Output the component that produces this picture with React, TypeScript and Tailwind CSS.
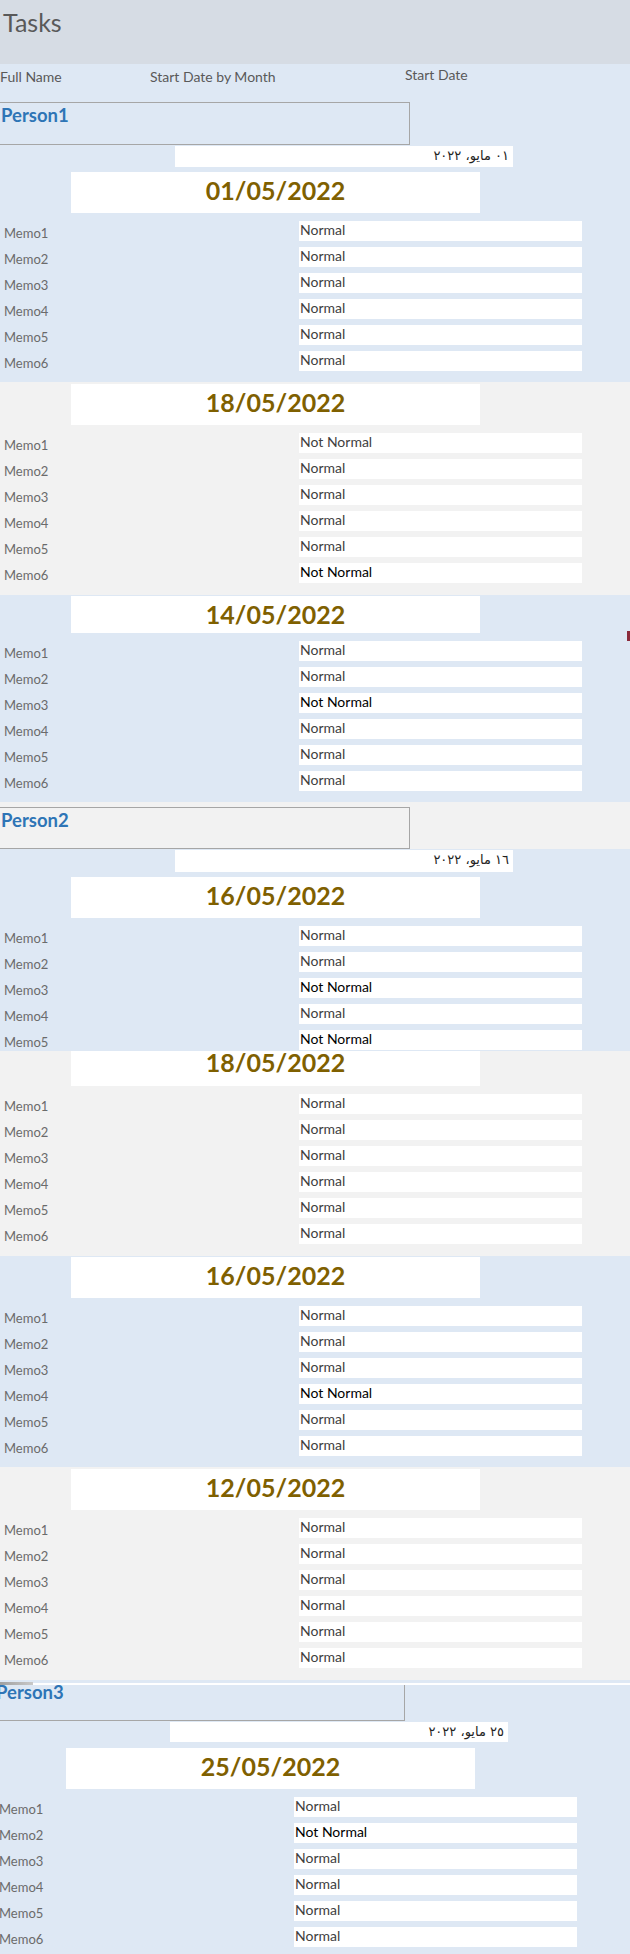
import clsx from "clsx";

type Memo = { label: string; value: string; dark?: boolean };

const makeMemos = (count: number, notNormal: number[], grayNot: number[] = []): Memo[] =>
	Array.from({ length: count }, (_, i) => {
		const n = i + 1;
		const isNot = notNormal.includes(n) || grayNot.includes(n);
		return {
			label: `Memo${n}`,
			value: isNot ? "Not Normal" : "Normal",
			dark: notNormal.includes(n),
		};
	});

const MemoRows = ({ rows }: { rows: Memo[] }) => (
	<div className="mt-[8px] flex flex-col gap-[6px]">
		{rows.map((r) => (
			<div key={r.label} className="flex h-[20px] items-start">
				<span className="w-[299px] pl-[4px] pt-[3px] text-[13px] leading-[18px] text-[#6b6b6b]">
					{r.label}
				</span>
				<span
					className={clsx(
						"h-[20px] w-[283px] bg-white pl-[1px] text-[14px] leading-[18px]",
						r.dark ? "text-black" : "text-[#404040]"
					)}
				>
					{r.value}
				</span>
			</div>
		))}
	</div>
);

const DateBox = ({ date, box }: { date: string; box: string }) => (
	<div
		className={clsx(
			"ml-[71px] w-[409px] bg-white text-center text-[25px] font-bold text-[#7f6000]",
			box
		)}
	>
		{date}
	</div>
);

const ArabicDate = ({ text, box }: { text: string; box: string }) => (
	<div
		dir="rtl"
		className={clsx(
			"ml-[175px] w-[338px] bg-white pr-[4px] font-['DejaVu_Sans',sans-serif] text-[13px] leading-[20px] text-[#222222]",
			box
		)}
	>
		{text}
	</div>
);

const PersonBox = ({ name, box }: { name: string; box: string }) => (
	<div
		className={clsx(
			"w-[410px] border-r border-b border-[#a6a6a6] pl-[1px] text-[18.5px] font-bold text-[#2e75b6]",
			box
		)}
	>
		{name}
	</div>
);

const App = () => {
	return (
		<div className="relative h-[1954px] w-[630px] overflow-hidden bg-[#dee8f4] font-[Lato,'Noto_Sans',sans-serif]">
			<header className="h-[64px] bg-[#d6dce4] pl-[3px] pt-[7px] text-[25px] leading-[30px] text-[#595959]">
				Tasks
			</header>

			{/* Person1 */}
			<section className="bg-[#dee8f4] pb-[11px]">
				<div className="flex h-[38px] text-[14px] leading-[18px] text-[#595959]">
					<span className="w-[150px] pt-[4px]">Full Name</span>
					<span className="w-[255px] pt-[4px]">Start Date by Month</span>
					<span className="pt-[2px]">Start Date</span>
				</div>
				<PersonBox name="Person1" box="h-[43px] border-t leading-[24px]" />
				<ArabicDate text="٠١ مايو، ٢٠٢٢" box="mt-[1px] h-[21px]" />
				<div className="mt-[5px]">
					<DateBox date="01/05/2022" box="h-[41px] leading-[37px]" />
				</div>
				<MemoRows rows={makeMemos(6, [])} />
			</section>

			<section className="bg-[#f2f2f2] pt-[2px] pb-[12px]">
				<DateBox date="18/05/2022" box="h-[41px] leading-[37px]" />
				<MemoRows rows={makeMemos(6, [6], [1])} />
			</section>

			<section className="bg-[#dee8f4] pt-[1px] pb-[11px]">
				<DateBox date="14/05/2022" box="h-[37px] leading-[37px]" />
				<MemoRows rows={makeMemos(6, [3])} />
			</section>

			{/* Person2 */}
			<section className="bg-[#f2f2f2] pt-[5px]">
				<PersonBox name="Person2" box="h-[42px] border-t leading-[24px]" />
			</section>

			<section className="bg-[#dee8f4] pt-[1px] pb-[1px]">
				<ArabicDate text="١٦ مايو، ٢٠٢٢" box="h-[22px]" />
				<div className="mt-[5px]">
					<DateBox date="16/05/2022" box="h-[41px] leading-[37px]" />
				</div>
				<MemoRows rows={makeMemos(5, [3, 5])} />
			</section>

			<section className="bg-[#f2f2f2] pb-[12px]">
				<DateBox date="18/05/2022" box="h-[35px] leading-[23px]" />
				<MemoRows rows={makeMemos(6, [])} />
			</section>

			<section className="bg-[#dee8f4] pt-[1px] pb-[11px]">
				<DateBox date="16/05/2022" box="h-[41px] leading-[37px]" />
				<MemoRows rows={makeMemos(6, [4])} />
			</section>

			<section className="bg-[#f2f2f2] pt-[2px] pb-[12px]">
				<DateBox date="12/05/2022" box="h-[41px] leading-[37px]" />
				<MemoRows rows={makeMemos(6, [])} />
			</section>

			<div className="flex h-[5px] items-end bg-[#dee8f4]">
				<div className="h-[3px] w-[33px] bg-gradient-to-r from-[#a0a0a0] to-[#c8c8c8]" />
				<div className="h-[2px] flex-1 bg-white" />
			</div>

			{/* Person3 */}
			<section className="bg-[#dee8f4] pb-[7px]">
				<div className="-ml-[5px]">
					<PersonBox name="Person3" box="h-[36px] leading-[14px]" />
					<ArabicDate text="٢٥ مايو، ٢٠٢٢" box="mt-[1px] h-[20px]" />
					<div className="mt-[6px]">
						<DateBox date="25/05/2022" box="h-[41px] leading-[37px]" />
					</div>
					<MemoRows rows={makeMemos(6, [2])} />
				</div>
			</section>

			<span className="absolute top-[631px] right-0 h-[10px] w-[3px] bg-[#8b2b3b]" />
		</div>
	);
};

export default App;
